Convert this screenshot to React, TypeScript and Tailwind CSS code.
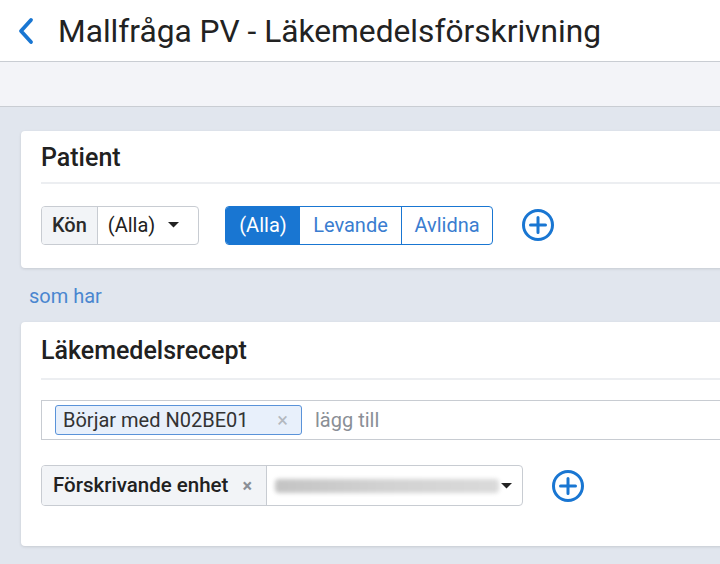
import React from "react";

const Plus = () => (
  <svg width="34" height="34" viewBox="0 0 34 34" className="shrink-0">
    <circle cx="17" cy="17" r="14.5" fill="none" stroke="#1976d2" strokeWidth="3" />
    <path d="M17 9.5v15M9.5 17h15" stroke="#1976d2" strokeWidth="3" strokeLinecap="round" />
  </svg>
);

const Caret = () => (
  <svg width="11" height="6" viewBox="0 0 11 6">
    <path d="M0 0h11L5.5 5.5z" fill="#222" />
  </svg>
);

export default function App() {
  return (
    <div className="min-h-[564px] w-[720px] overflow-hidden bg-[#e1e6ee] font-['Roboto',sans-serif] text-[#212121]">
      <header className="flex h-[62px] items-center gap-[22px] border-b border-[#c9cdd3] bg-white pl-[16px]">
        <svg width="20" height="30" viewBox="0 0 20 30">
          <path d="M15 4 5 15l10 11" fill="none" stroke="#1976d2" strokeWidth="3.8" strokeLinecap="round" strokeLinejoin="round" />
        </svg>
        <h1 className="whitespace-nowrap pt-[3px] text-[31.7px] leading-none text-[#222]">Mallfråga PV - Läkemedelsförskrivning</h1>
      </header>
      <div className="h-[45px] border-b border-[#c9cdd3] bg-[#f3f4f8]" />

      <main className="pl-[21px] pt-[24px]">
        <section className="w-[760px] rounded-[4px] bg-white shadow-[0_1px_3px_rgba(0,0,0,0.12)]">
          <div className="px-[20px]">
            <h2 className="h-[53px] border-b-2 border-[#eceef1] pt-[14px] text-[25px] font-medium leading-none">Patient</h2>
          </div>
          <div className="flex h-[84px] items-center px-[20px] pb-[2px]">
            <div className="flex h-[39px] w-[158px] overflow-hidden rounded-[4px] border border-[#c8ccd2] text-[20px]">
              <span className="flex items-center border-r border-[#c8ccd2] bg-[#f2f4f7] px-[10px] font-medium text-[#2a2a2a]">Kön</span>
              <span className="flex flex-1 items-center gap-[13px] pl-[10px]">
                (Alla) <Caret />
              </span>
            </div>
            <div className="ml-[26px] flex h-[39px] overflow-hidden rounded-[4px] border border-[#1976d2] text-[20px]">
              <span className="flex w-[74px] items-center justify-center bg-[#1976d2] text-white">(Alla)</span>
              <span className="flex w-[102px] items-center justify-center border-r border-[#1976d2] text-[#3a7dd0]">Levande</span>
              <span className="flex w-[90px] items-center justify-center text-[#3a7dd0]">Avlidna</span>
            </div>
            <div className="ml-[28px]">
              <Plus />
            </div>
          </div>
        </section>

        <p className="flex h-[54px] items-center pl-[8px] pt-[1px] text-[20px] text-[#4a86d0]">som har</p>

        <section className="w-[760px] rounded-[4px] bg-white pb-[40px] shadow-[0_1px_3px_rgba(0,0,0,0.12)]">
          <div className="px-[20px]">
            <h2 className="h-[58px] border-b-2 border-[#eceef1] pt-[16px] text-[25px] font-medium leading-none">Läkemedelsrecept</h2>
          </div>
          <div className="pl-[20px] pt-[20px]">
            <div className="flex h-[40px] items-center gap-[13px] border border-r-0 border-[#c8ccd2] pl-[13px]">
              <span className="flex h-[30px] w-[247px] items-center justify-between rounded-[3px] border border-[#5a93d9] bg-[#e8f0fb] pl-[7px] pr-[13px] text-[20px] text-[#333]">
                Börjar med N02BE01
                <span className="text-[20px] text-[#b3b8bf]">×</span>
              </span>
              <span className="text-[20px] text-[#8a8f96]">lägg till</span>
            </div>
          </div>
          <div className="flex items-center pl-[20px] pt-[25px]">
            <div className="flex h-[41px] w-[482px] overflow-hidden rounded-[4px] border border-[#c8ccd2]">
              <span className="flex w-[225px] items-center gap-[14px] border-r border-[#c8ccd2] bg-[#f2f4f7] pl-[11px] text-[20.5px] font-medium">
                Förskrivande enhet <span className="text-[18px] font-bold text-[#8a8f96]">×</span>
              </span>
              <span className="flex flex-1 items-center gap-[2px] pl-[8px]">
                <span className="h-[14px] w-[224px] rounded-sm bg-gradient-to-r from-[#c4c4c4] via-[#d2d2d2] to-[#dadada] blur-[2px]" />
                <Caret />
              </span>
            </div>
            <div className="ml-[28px]">
              <Plus />
            </div>
          </div>
        </section>
      </main>
    </div>
  );
}
